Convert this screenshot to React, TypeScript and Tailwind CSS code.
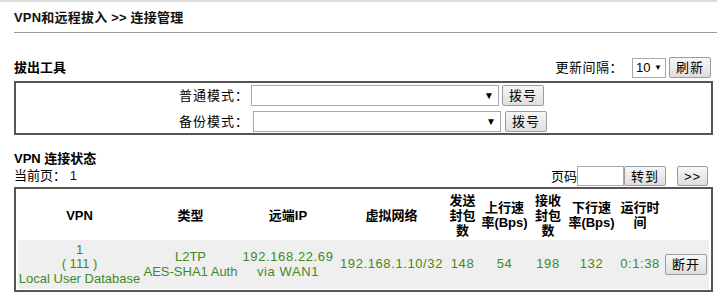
import React from "react";

const Btn = ({ children, className = "" }: { children: React.ReactNode; className?: string }) => (
  <div
    className={
      "flex items-center justify-center border border-[#9c9c9c] rounded-[2px] bg-gradient-to-b from-[#f7f7f7] to-[#dedede] text-[13px] leading-[15px] text-black tracking-[1px] " +
      className
    }
  >
    {children}
  </div>
);

const Select = ({ className = "" }: { className?: string }) => (
  <div className={"relative border border-[#a9a9a9] bg-white " + className}>
    <span className="absolute right-[4px] top-1/2 -translate-y-1/2 text-[10px] leading-[10px] text-black">▼</span>
  </div>
);

export default function App() {
  const data = "text-[#3f8a1f] text-center align-middle whitespace-nowrap";
  const num = "text-[#3f8a1f] text-center align-middle whitespace-nowrap tracking-[0.6px]";
  return (
    <div className="w-[717px] h-[293px] overflow-hidden bg-white border-t-2 border-[#dcdcdc] text-[13px] leading-[15px] text-black font-['Liberation_Sans','Noto_Sans_CJK_SC',sans-serif]">
      <div className="ml-[14px] pt-[8px] pb-[7px] border-b border-[#9a9a9a] font-bold text-[#111] tracking-[0.2px]">
        VPN和远程拔入 &gt;&gt; 连接管理
      </div>

      <div className="mt-[24px] ml-[14px] mr-[6px] h-[21px] flex items-center justify-between">
        <div className="font-bold">拔出工具</div>
        <div className="flex items-center">
          <span className="tracking-[0.5px]">更新间隔：</span>
          <div className="relative ml-[9px] w-[34px] h-[20px] border border-[#a9a9a9] bg-white flex items-center pl-[3px]">
            <span className="text-[13px]">10</span>
            <span className="absolute right-[3px] top-1/2 -translate-y-1/2 text-[8px] leading-[8px]">▼</span>
          </div>
          <Btn className="ml-[3px] w-[42px] h-[21px]">刷新</Btn>
        </div>
      </div>

      <div className="mt-[3px] ml-[14px] w-[699px] h-[54px] border-2 border-[#555] pt-[2px] flex flex-col gap-[5px]">
        <div className="flex items-center h-[21px]">
          <div className="w-[233px] text-right tracking-[1px]">普通模式：</div>
          <Select className="ml-[2px] w-[248px] h-[21px]" />
          <Btn className="ml-[3px] w-[42px] h-[21px]">拨号</Btn>
        </div>
        <div className="flex items-center h-[21px]">
          <div className="w-[233px] text-right tracking-[1px]">备份模式：</div>
          <Select className="ml-[4px] w-[248px] h-[21px]" />
          <Btn className="ml-[4px] w-[42px] h-[21px]">拨号</Btn>
        </div>
      </div>

      <div className="mt-[16px] ml-[14px] font-bold">VPN 连接状态</div>
      <div className="ml-[14px] mr-[9px] h-[21px] flex justify-between">
        <div className="pt-[2px]">
          当前页： <span className="text-[#000080]">1</span>
        </div>
        <div className="flex items-start">
          <span className="pt-[3px]">页码</span>
          <div className="w-[47px] h-[20px] border border-[#a9a9a9] bg-white" />
          <Btn className="w-[42px] h-[20px]">转到</Btn>
          <Btn className="ml-[11px] w-[31px] h-[20px]">&gt;&gt;</Btn>
        </div>
      </div>

      <div className="ml-[14px] w-[699px] border-2 border-[#555] px-[2px] py-[1px]">
        <table className="w-[691px] table-fixed border-separate border-spacing-0">
          <colgroup>
            <col className="w-[123px]" />
            <col className="w-[99px]" />
            <col className="w-[96px]" />
            <col className="w-[111px]" />
            <col className="w-[31px]" />
            <col className="w-[53px]" />
            <col className="w-[34px]" />
            <col className="w-[53px]" />
            <col className="w-[44px]" />
            <col className="w-[47px]" />
          </colgroup>
          <thead>
            <tr className="h-[50px] font-bold">
              <th className="text-center align-middle p-0">VPN</th>
              <th className="text-center align-middle p-0">类型</th>
              <th className="text-center align-middle p-0">远端IP</th>
              <th className="text-center align-middle p-0">虚拟网络</th>
              <th className="text-center align-middle p-0">发送<br />封包<br />数</th>
              <th className="text-center align-middle p-0">上行速<br />率(Bps)</th>
              <th className="text-center align-middle p-0">接收<br />封包<br />数</th>
              <th className="text-center align-middle p-0">下行速<br />率(Bps)</th>
              <th className="text-center align-middle p-0">运行时<br />间</th>
              <th className="p-0"></th>
            </tr>
          </thead>
          <tbody>
            <tr className="h-[49px] bg-[#efefef] leading-[14.5px]">
              <td className={data}>1<br />( 111 )<br />Local User Database</td>
              <td className={data}>L2TP<br />AES-SHA1 Auth</td>
              <td className={num}>192.168.22.69<br />via WAN1</td>
              <td className={num}>192.168.1.10/32</td>
              <td className={num}>148</td>
              <td className={num}>54</td>
              <td className={num}>198</td>
              <td className={num}>132</td>
              <td className={num}>0:1:38</td>
              <td className="align-middle p-0">
                <Btn className="ml-[3px] w-[42px] h-[21px]">断开</Btn>
              </td>
            </tr>
          </tbody>
        </table>
      </div>
    </div>
  );
}
